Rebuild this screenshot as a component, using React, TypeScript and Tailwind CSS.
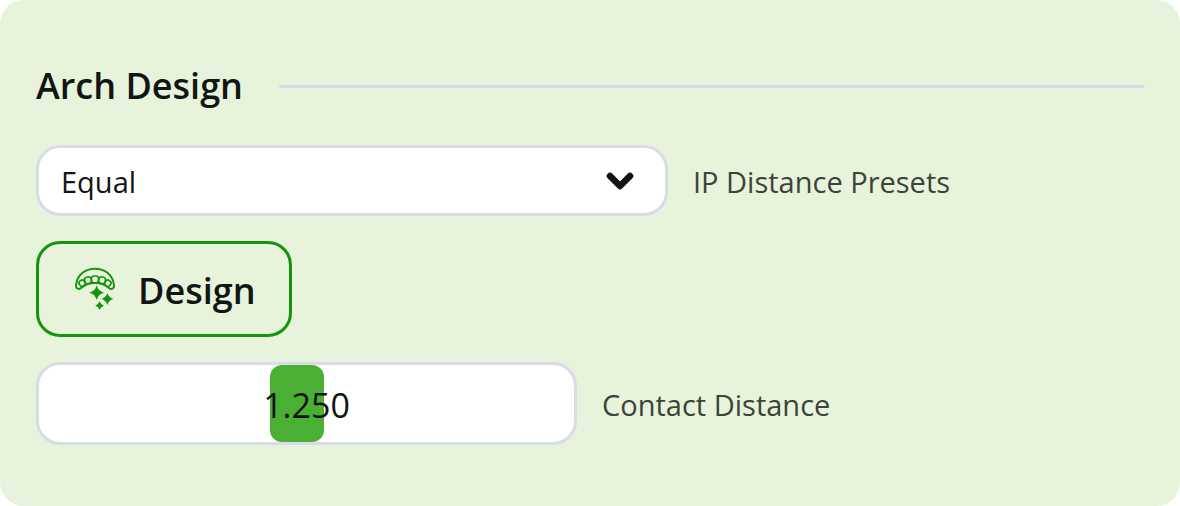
import { FC, ReactNode, useState } from 'react';
import { ChevronDown } from 'lucide-react';

const ArchIcon: FC = () => (
  <svg
    viewBox="42 37 126 132"
    className="h-11 w-[42px] shrink-0 text-[#15950f]"
    fill="none"
    stroke="currentColor"
    strokeWidth="5"
    strokeLinejoin="round"
    aria-hidden="true"
  >
    <path
      strokeWidth="6"
      d="M48 92C51 60 76 42 105 42s54 18 57 50c1 10-8 14-15 8-9-9-22-15-42-15s-33 6-42 15c-7 6-16 2-15-8Z"
    />
    <rect x="94" y="64" width="22" height="21" rx="8" />
    <rect x="74" y="67" width="20" height="20" rx="8" transform="rotate(-16 84 77)" />
    <rect x="116" y="67" width="20" height="20" rx="8" transform="rotate(16 126 77)" />
    <rect x="58" y="77" width="17" height="18" rx="7" transform="rotate(-38 66 86)" />
    <rect x="135" y="77" width="17" height="18" rx="7" transform="rotate(38 144 86)" />
    <g fill="currentColor" stroke="none">
      <path d="M110 92q4 18 22 22-18 4-22 22-4-18-22-22 18-4 22-22Z" />
      <path d="M142 115q4 14 18 18-14 4-18 18-4-14-18-18 14-4 18-18Z" />
      <path d="M119 140q3 9 13 13-10 3-13 13-3-10-13-13 10-4 13-13Z" />
    </g>
  </svg>
);

interface FieldProps {
  id: string;
  label: string;
  children: ReactNode;
}

const Field: FC<FieldProps> = ({ id, label, children }) => (
  <div className="flex items-center gap-[25px]">
    {children}
    <label htmlFor={id} className="shrink-0 pt-0.5 text-[29px] leading-10 text-[#3b4439]">
      {label}
    </label>
  </div>
);

const App: FC = () => {
  const [preset, setPreset] = useState('Equal');
  const [distance, setDistance] = useState(1.25);

  return (
    <section className="flex flex-col gap-[25px] rounded-3xl bg-[#e7f3da] px-9 pt-14 pb-[61px] font-['Open_Sans','Noto_Sans',sans-serif] text-[#111614]">
      <div className="mb-1 flex items-center gap-9">
        <h2 className="text-[36px] leading-[60px] font-semibold">Arch Design</h2>
        <div className="h-[3px] grow rounded-full bg-[#d9dce6]" />
      </div>

      <Field id="preset" label="IP Distance Presets">
        <div className="relative w-[632px] min-w-0">
          <select
            id="preset"
            value={preset}
            onChange={(e) => setPreset(e.target.value)}
            className="h-[71px] w-full appearance-none rounded-3xl border-3 border-[#d9dce6] bg-white pt-0.5 pr-20 pl-[22px] text-[29px]"
          >
            <option>Equal</option>
            <option>Anatomic</option>
            <option>Custom</option>
          </select>
          <ChevronDown
            className="pointer-events-none absolute inset-y-0 right-7 my-auto size-10"
            strokeWidth={4}
            aria-hidden="true"
          />
        </div>
      </Field>

      <button
        type="button"
        className="flex h-24 items-center gap-[22px] self-start rounded-3xl border-3 border-[#15950f] pr-[33px] pl-[35px] text-[36px] font-semibold"
      >
        <ArchIcon />
        <span className="pt-1">Design</span>
      </button>

      <Field id="distance" label="Contact Distance">
        <div className="relative h-[83px] w-[541px] min-w-0 rounded-3xl border-3 border-[#d9dce6] bg-white">
          <input
            id="distance"
            type="range"
            min={0}
            max={2.6}
            step={0.01}
            value={distance}
            onChange={(e) => setDistance(Number(e.target.value))}
            className="block h-full w-full appearance-none bg-transparent [&::-moz-range-thumb]:h-[77px] [&::-moz-range-thumb]:w-[54px] [&::-moz-range-thumb]:rounded-xl [&::-moz-range-thumb]:border-0 [&::-moz-range-thumb]:bg-[#4ab035] [&::-webkit-slider-thumb]:h-[77px] [&::-webkit-slider-thumb]:w-[54px] [&::-webkit-slider-thumb]:appearance-none [&::-webkit-slider-thumb]:rounded-xl [&::-webkit-slider-thumb]:bg-[#4ab035]"
          />
          <output
            htmlFor="distance"
            className="pointer-events-none absolute inset-0 flex items-center justify-center pt-1 text-[34px]"
          >
            {distance.toFixed(3)}
          </output>
        </div>
      </Field>
    </section>
  );
};

export default App;
